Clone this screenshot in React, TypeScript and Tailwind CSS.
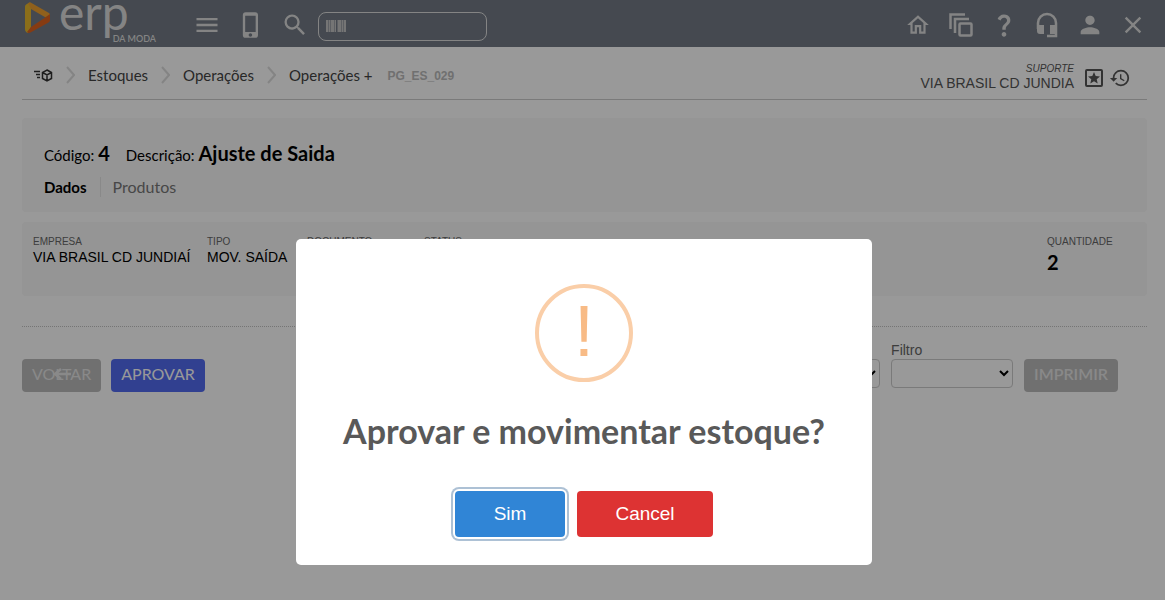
import { MdMenu, MdPhoneIphone, MdSearch, MdOutlineHome, MdQuestionMark, MdPerson, MdClose, MdHistory } from "react-icons/md";

const LogoMark = () => (
  <svg viewBox="0 0 27 32" className="h-8 w-[27px]">
    <path d="M1 4.500Q1 3 2.500 2.200L5 .8Q7 0 7 2v23l-3 6Q1 30 1 27z" fill="#e8b82c" />
    <path d="M4 1.200Q5.500 0 7 .8L25 11q1.500 1 1 3v4L7 7z" fill="#f0a030" />
    <path d="M7 25l12-8 7-5v6q0 1.500-1.500 2.500L6.500 30.500Q4.500 31.500 3 30z" fill="#e0631f" />
    <path d="M7 8l11 7.500L7 24z" fill="#737b86" />
  </svg>
);

const CopiesIcon = () => (
  <svg viewBox="0 0 24 24" className="size-6" fill="none" stroke="currentColor" strokeWidth="2.500">
    <path d="M1.500 16V1.500H16M6 20V6h14" />
    <rect x="10.500" y="10.500" width="12" height="12" rx="1" />
  </svg>
);

const HeadsetIcon = () => (
  <svg viewBox="0 0 22 26" className="h-[26px] w-[22px]">
    <path d="M2 17V11a9 9 0 0 1 18 0v13H11" fill="none" stroke="currentColor" strokeWidth="2.500" />
    <path d="M1 13h7v9H4a3 3 0 0 1-3-3zM14 13h7v9h-7z" fill="currentColor" />
  </svg>
);

const BoxIcon = () => (
  <svg viewBox="0 0 19 13" className="h-[13px] w-[19px]" fill="none" stroke="currentColor" strokeWidth="1.500">
    <path d="M0 2.500h6M2 5.500h4M3 8.500h3" />
    <path d="M13 1l4.500 2.500v6L13 12l-4.500-2.500v-6zM8.500 3.500L13 6l4.500-2.500M13 6v6" />
  </svg>
);

const StarBoxIcon = () => (
  <svg viewBox="0 0 18 18" className="size-[18px]">
    <rect x="1" y="1" width="16" height="16" rx="1" fill="none" stroke="currentColor" strokeWidth="2" />
    <path d="M9 3l1.700 4 4.300.4-3.300 2.800 1 4.300L9 12.200l-3.700 2.300 1-4.300L3 7.400 7.300 7z" fill="currentColor" />
  </svg>
);

const Barcode = () => (
  <svg viewBox="0 0 20 12" className="h-3 w-5" fill="#c4c4c4">
    <path d="M0 0h2v12H0zM2.500 0h2v12h-2zM5 0h3.500v12H5zM9 0h1v12H9zM11.500 0h3.500v12h-3.500zM15.500 0h2v12h-2zM18 0h2v12h-2z" />
  </svg>
);

const Chevron = () => (
  <svg viewBox="0 0 9 18" className="h-[18px] w-[9px] shrink-0 text-[#dddddd]" fill="none" stroke="currentColor" strokeWidth="2">
    <path d="M1 1l7 8-7 8" />
  </svg>
);

const fields = [
  { label: "EMPRESA", value: "VIA BRASIL CD JUNDIAÍ" },
  { label: "TIPO", value: "MOV. SAÍDA" },
  { label: "DOCUMENTO", value: "" },
  { label: "STATUS", value: "" },
];

const crumbs = ["Estoques", "Operações", "Operações +"];

const actions = [
  { label: "Início", icon: <MdOutlineHome className="size-[26px]" /> },
  { label: "Janelas", icon: <CopiesIcon /> },
  { label: "Ajuda", icon: <MdQuestionMark className="size-7" /> },
  { label: "Suporte", icon: <HeadsetIcon /> },
  { label: "Usuário", icon: <MdPerson className="size-7" /> },
  { label: "Fechar", icon: <MdClose className="size-7" /> },
];

const Header = () => (
  <header className="flex h-[47px] items-center justify-between bg-[#737b86] pl-6 pr-[11px] text-[#dddddd]">
    <div className="flex items-center">
      <a href="#" className="relative flex h-[47px] w-[132px] items-start gap-2 pt-0.5" aria-label="erp da moda">
        <LogoMark />
        <span className="-mt-2 font-[Lato] text-5xl leading-9">erp</span>
        <span className="absolute bottom-0 right-0 font-[Lato] text-[9px] font-semibold leading-4">DA MODA</span>
      </a>
      <div className="flex items-center gap-4 pl-[37px] pt-0.5">
        <button aria-label="Menu"><MdMenu className="size-7" /></button>
        <button aria-label="Celular"><MdPhoneIphone className="size-7" /></button>
        <button aria-label="Buscar"><MdSearch className="size-7" /></button>
      </div>
      <div className="relative ml-[9px] mt-1.5">
        <input aria-label="Código de barras" className="block h-[29px] w-[169px] rounded-lg border border-[#dddddd] pl-8 text-sm outline-none" />
        <span className="absolute left-2 top-2">
          <Barcode />
        </span>
      </div>
    </div>
    <nav className="flex items-center pt-0.5">
      {actions.map((a) => (
        <button key={a.label} aria-label={a.label} className="flex w-[43px] justify-center">
          {a.icon}
        </button>
      ))}
    </nav>
  </header>
);

const App = () => {
  return (
    <div className="min-h-screen bg-white font-[Lato,sans-serif] text-black">
      <Header />
      <main className="pl-[22px] pr-[18px]">
        <div className="flex h-[53px] items-center justify-between border-b border-[#cccccc] pl-3 pr-4 text-[#555555]">
          <div className="flex items-center gap-[13px] pt-1 text-[15px] text-[#444444]">
            <span className="text-[#333333]"><BoxIcon /></span>
            {crumbs.map((crumb) => (
              <div key={crumb} className="flex items-center gap-[13px]">
                <Chevron />
                <a href="#">{crumb}</a>
              </div>
            ))}
            <span className="pl-0.5 pt-0.5 font-['Liberation_Sans'] text-xs font-bold text-[#bbbbbb]">PG_ES_029</span>
          </div>
          <div className="flex items-center gap-[11px] pt-2">
            <div className="text-right font-['Liberation_Sans'] leading-3">
              <div className="text-[10px] italic">SUPORTE</div>
              <div className="text-sm leading-4">VIA BRASIL CD JUNDIA</div>
            </div>
            <div className="flex items-center gap-1.5 pt-0.5">
              <StarBoxIcon />
              <MdHistory className="size-[22px]" />
            </div>
          </div>
        </div>

        <section className="mt-[18px] h-[94px] rounded bg-[#f8f8f8] px-[22px] pt-[21px]">
          <div className="flex items-baseline gap-4 text-[15px] leading-8">
            <div>Código: <b className="text-xl">4</b></div>
            <div>Descrição: <b className="text-xl">Ajuste de Saida</b></div>
          </div>
          <div className="flex items-center pt-1.5 text-[15px] leading-5">
            <a href="#" className="border-r border-[#e5e5e5] pr-[13px] font-bold">Dados</a>
            <a href="#" className="pl-3 text-base leading-5 text-[#777777]">Produtos</a>
          </div>
        </section>

        <section className="mt-2.5 grid h-[74px] grid-cols-[174px_100px_117px_1fr_100px] rounded bg-[#f8f8f8] pl-[11px] pt-3.5 font-['Liberation_Sans']">
          {fields.map((f) => (
            <div key={f.label}>
              <div className="text-[10px] leading-3 text-[#666666]">{f.label}</div>
              <div className="text-sm leading-[18px]">{f.value}</div>
            </div>
          ))}
          <div>
            <div className="text-[10px] leading-3 text-[#666666]">QUANTIDADE</div>
            <div className="font-[Lato] text-xl font-bold leading-7">2</div>
          </div>
        </section>

        <div className="mt-[30px] flex items-start justify-between border-t border-dotted border-[#c4c4c4] pr-[29px] pt-[15px]">
          <div className="flex gap-2.5 pt-[17px] text-base text-white">
            <button className="relative h-[33px] rounded bg-[#bbbbbb] px-2.5 pb-1 text-[#e5e5e5]">
              VOLTAR
              <svg viewBox="0 0 18 12" className="absolute left-[31px] top-[9px] h-3 w-[18px]" fill="none" stroke="currentColor" strokeWidth="2.500">
                <path d="M8 1L2 6l6 5M2 6h16" />
              </svg>
            </button>
            <button className="h-[33px] rounded bg-[#536bf0] px-2.5 pb-1">APROVAR</button>
          </div>
          <div className="flex items-end gap-[11px]">
            <select aria-label="Relatório" className="mb-1 h-[29px] w-[122px] rounded border border-[#cccccc]">
              <option></option>
            </select>
            <div className="mb-1 flex flex-col gap-px">
              <label htmlFor="filtro" className="font-['Liberation_Sans'] text-sm leading-4 text-[#666666]">Filtro</label>
              <select id="filtro" className="h-[29px] w-[122px] rounded border border-[#cccccc]">
                <option></option>
              </select>
            </div>
            <button className="h-[33px] rounded bg-[#bbbbbb] px-2.5 pb-1 text-base font-semibold text-[#e5e5e5]">IMPRIMIR</button>
          </div>
        </div>
      </main>

      <div className="fixed inset-0 flex items-start justify-center bg-black/40 pl-[3px] pt-[239px]">
        <div role="dialog" aria-labelledby="dialog-title" className="flex w-[576px] flex-col items-center rounded-[5px] bg-white pb-7 pt-[45px]">
          <div className="flex size-[98px] items-center justify-center rounded-full border-4 border-[#facea8] pb-1 font-['Liberation_Sans'] text-[72px] leading-none text-[#f8bb86]">
            !
          </div>
          <h2 id="dialog-title" className="mt-[27px] text-[34px] font-bold leading-11 text-[#595959]">Aprovar e movimentar estoque?</h2>
          <div className="mt-[38px] flex gap-3 font-['Liberation_Sans'] text-[19px] text-white">
            <button className="h-[46px] w-[110px] rounded bg-[#3085d6] shadow-[0_0_0_2px_#fff,0_0_0_4px_rgba(50,100,150,0.4)]">Sim</button>
            <button className="h-[46px] w-[136px] rounded bg-[#dd3333]">Cancel</button>
          </div>
        </div>
      </div>
    </div>
  );
};

export default App;
